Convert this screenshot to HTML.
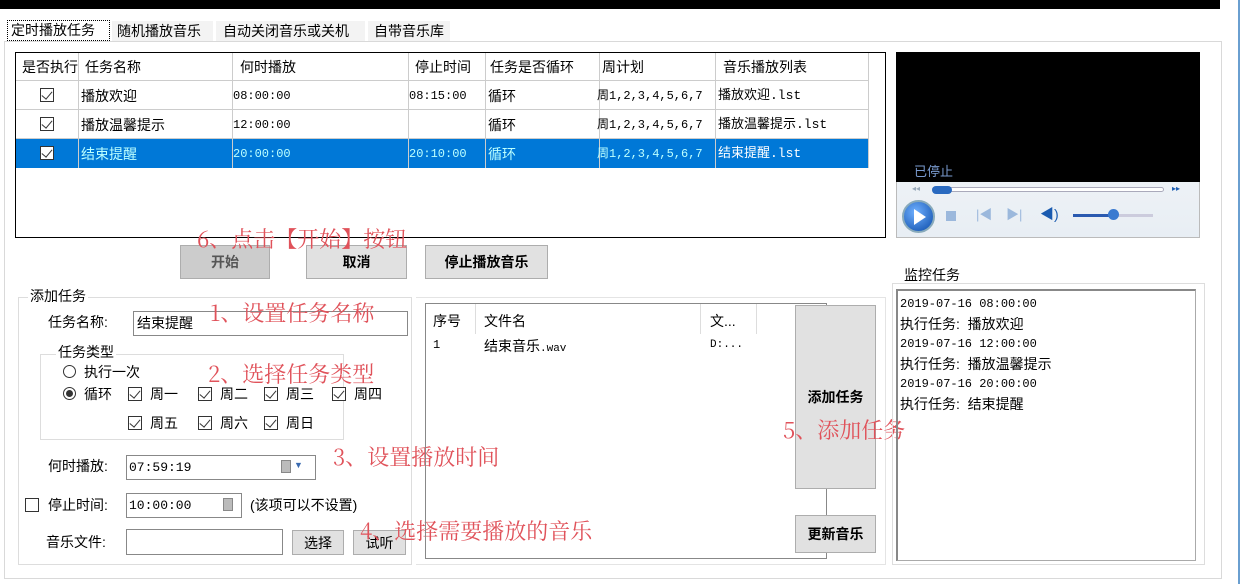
<!DOCTYPE html>
<html><head><meta charset="utf-8"><style>
*{margin:0;padding:0;box-sizing:border-box}
body{width:1242px;height:584px;background:#fff;position:relative;overflow:hidden;font-family:"Liberation Sans","Noto Sans CJK SC","WenQuanYi Zen Hei",sans-serif;font-size:14px;color:#000}
.a{position:absolute}
.t{position:absolute;white-space:nowrap;line-height:1}
.red{color:#e0525a;font-size:21px;font-family:"Noto Serif CJK SC","Noto Sans CJK SC",serif}
.btn{position:absolute;background:#e1e1e1;border:1px solid #adadad;font-weight:bold;display:flex;align-items:center;justify-content:center;font-size:14px}
.cb{position:absolute;width:14px;height:14px;border:1px solid #333;background:#fff}
.cb.c::after{content:"";position:absolute;left:3px;top:0px;width:5px;height:9px;border-right:1.5px solid #333;border-bottom:1.5px solid #333;transform:rotate(40deg)}
.mono{font-family:"Liberation Mono","Noto Sans CJK SC",monospace;font-size:12px}
</style></head><body>
<div class="a" style="left:0;top:0;width:1220px;height:9px;background:#000"></div>
<div class="a" style="left:1238px;top:0;width:2px;height:584px;background:#6a9fd0"></div>
<div class="a" style="left:4px;top:41px;width:1218px;height:538px;border:1px solid #d9d9d9"></div>
<div class="a" style="left:7px;top:20px;width:103px;height:21px;border:1px dotted #000;background:#fff"></div>
<div class="t" style="left:11px;top:23px;font-size:14px">定时播放任务</div>
<div class="a" style="left:112px;top:21px;width:101px;height:20px;background:#f3f3f3"></div>
<div class="t" style="left:117px;top:24px">随机播放音乐</div>
<div class="a" style="left:216px;top:21px;width:149px;height:20px;background:#f3f3f3"></div>
<div class="t" style="left:223px;top:24px">自动关闭音乐或关机</div>
<div class="a" style="left:368px;top:21px;width:82px;height:20px;background:#f3f3f3"></div>
<div class="t" style="left:374px;top:24px">自带音乐库</div>
<!-- table -->
<div class="a" style="left:15px;top:52px;width:871px;height:186px;border:1.5px solid #000"></div>
<div class="a" style="left:16px;top:53px;width:852px;height:28px;border-bottom:1px solid #ccc"></div>
<div class="a" style="left:16px;top:81px;width:852px;height:29px;border-bottom:1px solid #ccc"></div>
<div class="a" style="left:16px;top:110px;width:852px;height:29px;border-bottom:1px solid #ccc"></div>
<div class="a" style="left:16px;top:139px;width:852px;height:29px;background:#0078d7"></div>
<div class="a" style="left:78px;top:53px;width:1px;height:115px;background:#ccc"></div>
<div class="a" style="left:232px;top:53px;width:1px;height:115px;background:#ccc"></div>
<div class="a" style="left:408px;top:53px;width:1px;height:115px;background:#ccc"></div>
<div class="a" style="left:485px;top:53px;width:1px;height:115px;background:#ccc"></div>
<div class="a" style="left:599px;top:53px;width:1px;height:115px;background:#ccc"></div>
<div class="a" style="left:715px;top:53px;width:1px;height:115px;background:#ccc"></div>
<div class="a" style="left:868px;top:53px;width:1px;height:115px;background:#ccc"></div>
<div class="t" style="left:22px;top:60px">是否执行</div>
<div class="t" style="left:85px;top:60px">任务名称</div>
<div class="t" style="left:240px;top:60px">何时播放</div>
<div class="t" style="left:415px;top:60px">停止时间</div>
<div class="t" style="left:490px;top:60px">任务是否循环</div>
<div class="t" style="left:602px;top:60px">周计划</div>
<div class="t" style="left:723px;top:60px">音乐播放列表</div>
<div class="cb c" style="left:40px;top:88px"></div>
<div class="cb c" style="left:40px;top:117px"></div>
<div class="cb c" style="left:40px;top:146px"></div>
<div class="t" style="left:81px;top:89px">播放欢迎</div>
<div class="t mono" style="left:233px;top:90px">08:00:00</div>
<div class="t mono" style="left:409px;top:90px">08:15:00</div>
<div class="t" style="left:488px;top:89px">循环</div>
<div class="t mono" style="left:597px;top:90px">周1,2,3,4,5,6,7</div>
<div class="t mono" style="left:718px;top:89px;font-size:13px">播放欢迎.lst</div>
<div class="t" style="left:81px;top:118px">播放温馨提示</div>
<div class="t mono" style="left:233px;top:119px">12:00:00</div>
<div class="t" style="left:488px;top:118px">循环</div>
<div class="t mono" style="left:597px;top:119px">周1,2,3,4,5,6,7</div>
<div class="t mono" style="left:718px;top:118px;font-size:13px">播放温馨提示.lst</div>
<div class="t" style="left:81px;top:147px;color:#bff">结束提醒</div>
<div class="t mono" style="left:233px;top:148px;color:#bff">20:00:00</div>
<div class="t mono" style="left:409px;top:148px;color:#bff">20:10:00</div>
<div class="t" style="left:488px;top:147px;color:#bff">循环</div>
<div class="t mono" style="left:597px;top:148px;color:#bff">周1,2,3,4,5,6,7</div>
<div class="t mono" style="left:718px;top:147px;color:#fff;font-size:13px">结束提醒.lst</div>
<!-- video -->
<div class="a" style="left:896px;top:52px;width:304px;height:186px;border:1px solid #bbb;background:linear-gradient(#fafafa,#e8eef4)"></div>
<div class="a" style="left:896px;top:52px;width:304px;height:130px;background:#000"></div>
<div class="t" style="left:914px;top:165px;font-size:13px;color:#7a9bd0">已停止</div>
<div class="a" style="left:932px;top:187px;width:232px;height:5px;border:1px solid #aab;border-radius:3px;background:#fff"></div>
<div class="a" style="left:932px;top:186px;width:20px;height:8px;border-radius:4px;background:#2a6ac0"></div>
<div class="t" style="left:912px;top:185px;font-size:8px;color:#9ab">◂◂</div>
<div class="t" style="left:1172px;top:185px;font-size:8px;color:#1a5bb0">▸▸</div>
<div class="a" style="left:902px;top:200px;width:33px;height:33px;border-radius:50%;background:radial-gradient(circle at 40% 35%,#6fb0ff,#0a4aa8);border:2px solid #8ab"></div>
<div class="a" style="left:914px;top:209px;width:0;height:0;border-left:12px solid #fff;border-top:8px solid transparent;border-bottom:8px solid transparent"></div>
<div class="a" style="left:946px;top:211px;width:10px;height:10px;background:#9bb8dc"></div>
<div class="t" style="left:976px;top:208px;font-size:13px;color:#9bb8dc">|◀</div>
<div class="t" style="left:1006px;top:208px;font-size:13px;color:#9bb8dc">▶|</div>
<div class="t" style="left:1040px;top:207px;font-size:14px;color:#1a5bb0">◀)</div>
<div class="a" style="left:1073px;top:214px;width:40px;height:3px;background:#2a5ab0"></div>
<div class="a" style="left:1113px;top:214px;width:40px;height:3px;background:#ccd"></div>
<div class="a" style="left:1108px;top:209px;width:11px;height:11px;border-radius:50%;background:#3a7ad0"></div>
<!-- buttons -->
<div class="btn" style="left:180px;top:245px;width:90px;height:34px;background:#cccccc;color:#555">开始</div>
<div class="btn" style="left:306px;top:245px;width:101px;height:34px">取消</div>
<div class="btn" style="left:425px;top:245px;width:123px;height:34px">停止播放音乐</div>
<div class="t red" style="left:197px;top:228px;font-size:22px">6、点击【开始】按钮</div>
<!-- add task group -->
<div class="a" style="left:18px;top:297px;width:394px;height:268px;border:1px solid #ddd"></div>
<div class="t" style="left:28px;top:289px;background:#fff;padding:0 2px">添加任务</div>
<div class="t" style="left:48px;top:315px">任务名称:</div>
<div class="a" style="left:133px;top:311px;width:275px;height:25px;border:1px solid #888"></div>
<div class="t" style="left:137px;top:316px">结束提醒</div>
<div class="t red" style="left:210px;top:302px;font-size:22px">1、设置任务名称</div>
<div class="a" style="left:40px;top:354px;width:304px;height:86px;border:1px solid #ddd"></div>
<div class="t" style="left:56px;top:345px;background:#fff;padding:0 2px">任务类型</div>
<div class="a" style="left:63px;top:365px;width:13px;height:13px;border:1px solid #333;border-radius:50%"></div>
<div class="t" style="left:84px;top:365px">执行一次</div>
<div class="a" style="left:63px;top:387px;width:13px;height:13px;border:1px solid #333;border-radius:50%"></div>
<div class="a" style="left:66px;top:390px;width:7px;height:7px;background:#333;border-radius:50%"></div>
<div class="t" style="left:84px;top:387px">循环</div>
<div class="cb c" style="left:128px;top:387px"></div><div class="t" style="left:150px;top:387px">周一</div>
<div class="cb c" style="left:198px;top:387px"></div><div class="t" style="left:220px;top:387px">周二</div>
<div class="cb c" style="left:264px;top:387px"></div><div class="t" style="left:286px;top:387px">周三</div>
<div class="cb c" style="left:332px;top:387px"></div><div class="t" style="left:354px;top:387px">周四</div>
<div class="cb c" style="left:128px;top:416px"></div><div class="t" style="left:150px;top:416px">周五</div>
<div class="cb c" style="left:198px;top:416px"></div><div class="t" style="left:220px;top:416px">周六</div>
<div class="cb c" style="left:264px;top:416px"></div><div class="t" style="left:286px;top:416px">周日</div>
<div class="t red" style="left:208px;top:363px;font-size:22px">2、选择任务类型</div>
<div class="t" style="left:48px;top:459px">何时播放:</div>
<div class="a" style="left:126px;top:455px;width:190px;height:25px;border:1px solid #888"></div>
<div class="t mono" style="left:129px;top:461px;font-size:13px">07:59:19</div>
<div class="a" style="left:281px;top:460px;width:10px;height:13px;background:#bbb;border:1px solid #888"></div>
<div class="t" style="left:294px;top:461px;font-size:9px;color:#3a6ab0">▼</div>
<div class="t red" style="left:333px;top:446px;font-size:22px">3、设置播放时间</div>
<div class="cb" style="left:25px;top:498px"></div>
<div class="t" style="left:48px;top:498px">停止时间:</div>
<div class="a" style="left:126px;top:493px;width:116px;height:25px;border:1px solid #888"></div>
<div class="t mono" style="left:129px;top:499px;font-size:13px">10:00:00</div>
<div class="a" style="left:223px;top:498px;width:10px;height:13px;background:#bbb;border:1px solid #888"></div>
<div class="t" style="left:250px;top:498px">(该项可以不设置)</div>
<div class="t" style="left:46px;top:535px">音乐文件:</div>
<div class="a" style="left:126px;top:529px;width:157px;height:26px;border:1px solid #888"></div>
<div class="btn" style="left:292px;top:530px;width:52px;height:25px;font-weight:normal">选择</div>
<div class="btn" style="left:353px;top:530px;width:53px;height:25px;font-weight:normal">试听</div>
<div class="t red" style="left:360px;top:520px;font-size:22px">4、选择需要播放的音乐</div>
<!-- file list -->
<div class="a" style="left:425px;top:303px;width:402px;height:256px;border:1px solid #888"></div>
<div class="a" style="left:475px;top:304px;width:1px;height:30px;background:#ddd"></div>
<div class="a" style="left:700px;top:304px;width:1px;height:30px;background:#ddd"></div>
<div class="a" style="left:756px;top:304px;width:1px;height:30px;background:#ddd"></div>
<div class="t" style="left:433px;top:314px">序号</div>
<div class="t" style="left:484px;top:314px">文件名</div>
<div class="t" style="left:710px;top:314px">文...</div>
<div class="t mono" style="left:433px;top:339px">1</div>
<div class="t" style="left:484px;top:339px">结束音乐<span class="mono" style="font-size:11px">.wav</span></div>
<div class="t mono" style="left:710px;top:340px;font-size:11px">D:...</div>
<div class="a" style="left:416px;top:297px;width:470px;height:268px;border:1px solid #e4e4e4;border-left:none"></div>
<div class="btn" style="left:795px;top:305px;width:81px;height:184px">添加任务</div>
<div class="btn" style="left:795px;top:515px;width:81px;height:38px">更新音乐</div>
<div class="t red" style="left:783px;top:419px;font-size:22px">5、添加任务</div>
<!-- monitor -->
<div class="a" style="left:892px;top:283px;width:313px;height:282px;border:1px solid #ddd"></div>
<div class="t" style="left:902px;top:268px;background:#fff;padding:0 2px">监控任务</div>
<div class="a" style="left:896px;top:289px;width:300px;height:272px;border:1px solid #aaa;border-top:2px solid #888;border-left:2px solid #888"></div>
<div class="a" style="left:900px;top:294px;line-height:20px;font-size:14px">
<div class="mono">2019-07-16 08:00:00</div>
<div>执行任务:&nbsp; 播放欢迎</div>
<div class="mono">2019-07-16 12:00:00</div>
<div>执行任务:&nbsp; 播放温馨提示</div>
<div class="mono">2019-07-16 20:00:00</div>
<div>执行任务:&nbsp; 结束提醒</div>
</div>
</body></html>
